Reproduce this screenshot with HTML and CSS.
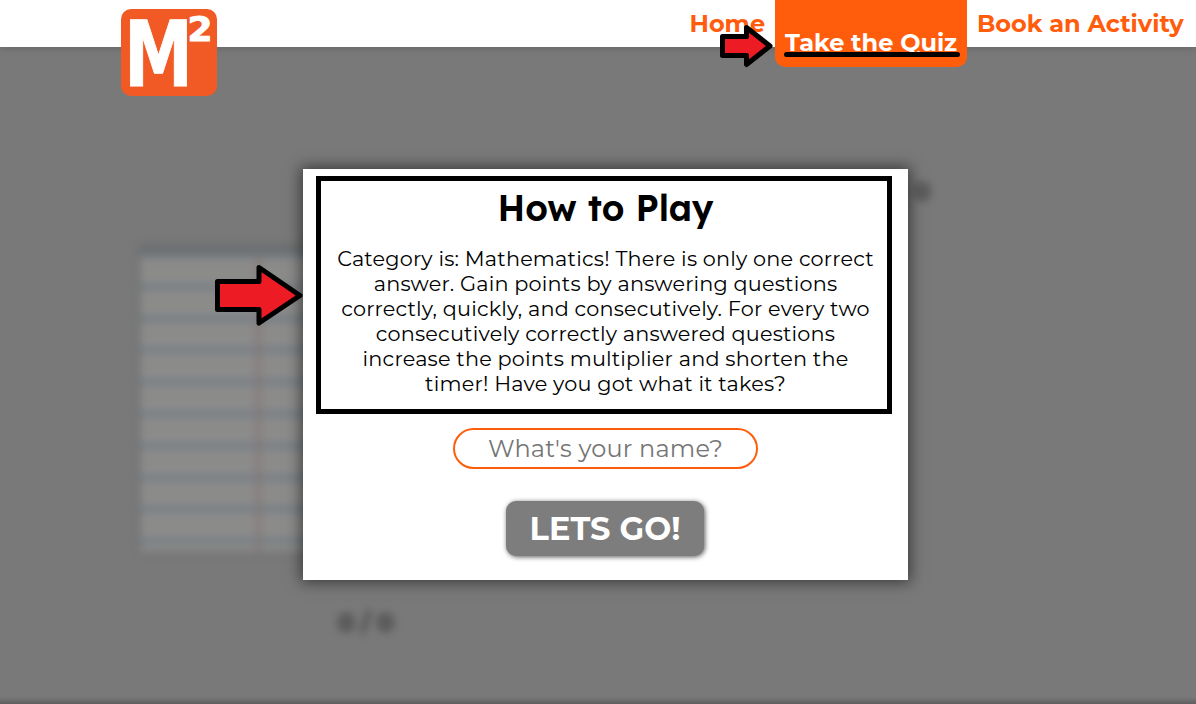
FILE: index.html
```
<!DOCTYPE html>
<html lang="en">
<head>
  <meta charset="utf-8">
  <title>M² Quiz</title>
  <link rel="stylesheet" href="styles.css">
</head>
<body>
  <header class="site-header">
    <a class="logo" href="#" aria-label="M squared">
      <svg width="96" height="87" viewBox="0 0 96 87">
        <rect class="logo-tile" width="96" height="87" rx="10"/>
        <text class="logo-m" x="3" y="76.500" textLength="69" lengthAdjust="spacingAndGlyphs">M</text>
        <text class="logo-two" x="66.500" y="31.500" textLength="25" lengthAdjust="spacingAndGlyphs">2</text>
      </svg>
    </a>
    <nav class="nav">
      <a class="nav-link home" href="#">Home</a>
      <a class="nav-link active" href="#">Take the Quiz</a>
      <a class="nav-link book" href="#">Book an Activity</a>
    </nav>
  </header>

  <main class="quiz">
    <div class="board">
      <div class="score">0</div>
      <div class="paper"></div>
      <div class="progress">0 / 0</div>
    </div>
    <section class="modal">
      <div class="instructions">
        <h1 class="title">How to Play</h1>
        <p class="copy">
          <span class="line">Category is: Mathematics! There is only one correct</span>
          <span class="line">answer. Gain points by answering questions</span>
          <span class="line">correctly, quickly, and consecutively. For every two</span>
          <span class="line">consecutively correctly answered questions</span>
          <span class="line">increase the points multiplier and shorten the</span>
          <span class="line">timer! Have you got what it takes?</span>
        </p>
      </div>
      <input class="name" type="text" placeholder="What's your name?">
      <button class="go" type="button">LETS GO!</button>
    </section>
  </main>

  <svg class="underline" width="180" height="8" viewBox="0 0 180 8"><path d="M4.500 4.500H175.500"/></svg>
  <svg class="arrow arrow-nav" width="60" height="50" viewBox="0 0 60 50"><path d="M7.500 16.500H31.500V7.500L55 26L31.500 44.500V35.500H7.500Z"/></svg>
  <svg class="arrow arrow-modal" width="96" height="70" viewBox="0 0 96 70"><path d="M7.500 21.500H49V7.500L90 35.500L49 63V49.500H7.500Z"/></svg>
</body>
</html>
```
FILE: styles.css
```
* { box-sizing: border-box; }
body {
  margin: 0;
  height: 704px;
  overflow: hidden;
  position: relative;
  font-family: Montserrat, Inter, "Liberation Sans", sans-serif;
  background: #797979;
}
.site-header {
  position: relative;
  z-index: 1;
  display: flex;
  justify-content: space-between;
  height: 47px;
  padding: 0 12px 0 121px;
  background: #fff;
  box-shadow: 0 0 9px rgba(0, 0, 0, .2);
}
.logo { display: block; height: 87px; margin-top: 9px; }
.logo svg { display: block; overflow: visible; }
.logo-tile { fill: #f15a24; }
.logo-m, .logo-two { fill: #fff; stroke: #fff; font-family: "DejaVu Sans", sans-serif; font-weight: 700; }
.logo-m { font-size: 91px; stroke-width: 1; }
.logo-two { font-size: 33px; stroke-width: 1; }
.nav { display: flex; align-items: flex-start; }
.nav-link {
  height: 47px;
  line-height: 47px;
  font-size: 24px;
  font-weight: 700;
  color: #ff5c0c;
  text-decoration: none;
  white-space: nowrap;
}
.home { width: 75px; margin-right: 10.500px; }
.active {
  width: 192px;
  height: 67px;
  margin-right: 10px;
  padding: 19px 0 0 10px;
  color: #fff;
  background: #ff5c0c;
  border-radius: 0 0 10px 10px;
}
.book { width: 207px; }
.quiz { position: relative; height: 657px; }
.quiz::after {
  content: "";
  position: absolute;
  inset: auto 0 0;
  height: 7px;
  background: linear-gradient(transparent, rgba(0, 0, 0, .22));
}
.board {
  display: flex;
  flex-direction: column;
  padding: 128px 0 0 140px;
  filter: blur(4px);
}
.score, .progress { font-size: 24px; line-height: 34px; font-weight: 700; color: #3c3c3c; }
.score { margin-left: 774px; }
.paper {
  width: 306px;
  height: 306px;
  margin-top: 37px;
  background:
    linear-gradient(#6d7072 9px, transparent 9px),
    linear-gradient(90deg, transparent 117px, #836f6f 117px, #836f6f 120px, transparent 120px),
    repeating-linear-gradient(180deg, #757d83 0, #757d83 6px, #8b8b8a 6px, #8b8b8a 31.800px) 0 6px;
  box-shadow: 0 0 5px rgba(0, 0, 0, .25);
}
.progress { margin: 54px 0 0 198px; }
.modal {
  position: absolute;
  top: 122px;
  left: 303px;
  display: flex;
  flex-direction: column;
  align-items: center;
  width: 605px;
  height: 411px;
  padding-top: 7px;
  background: #fff;
  box-shadow: 0 0 14px 2px rgba(0, 0, 0, .55);
}
.instructions {
  width: 576px;
  height: 238px;
  margin-right: 3px;
  padding: 7px 0 0 3px;
  border: 5px solid #000;
  text-align: center;
}
.title {
  margin: 0;
  font: 600 35.900px/40px Lexend, "Lexend Deca", Quicksand, Montserrat, Inter, sans-serif;
}
.copy { margin: 18px 0 0; font-size: 20.800px; line-height: 25px; letter-spacing: .18px; }
.line { display: block; white-space: nowrap; }
.name {
  width: 305px;
  height: 41px;
  margin-top: 14px;
  padding: 0;
  border: 2px solid #ff5c0c;
  border-radius: 21px;
  background: #fff;
  font: 24px Montserrat, Inter, sans-serif;
  letter-spacing: .18px;
  text-align: center;
}
.name::placeholder { color: #757575; }
.go {
  width: 198px;
  height: 55px;
  margin: 32px 1px 0 0;
  padding: 0;
  border: 0;
  border-radius: 10px;
  background: #7d7d7d;
  color: #fff;
  font: 700 32px/55px Montserrat, Inter, sans-serif;
  box-shadow: 1px 1px 5px rgba(0, 0, 0, .65);
}
.underline { position: absolute; z-index: 3; left: 782px; top: 50px; fill: none; stroke: #000; stroke-width: 5; stroke-linecap: round; }
.arrow { position: absolute; z-index: 3; fill: #ed1c24; stroke: #000; stroke-width: 5; stroke-linejoin: round; }
.arrow-nav { left: 715px; top: 20px; }
.arrow-modal { left: 210px; top: 260px; }
```
